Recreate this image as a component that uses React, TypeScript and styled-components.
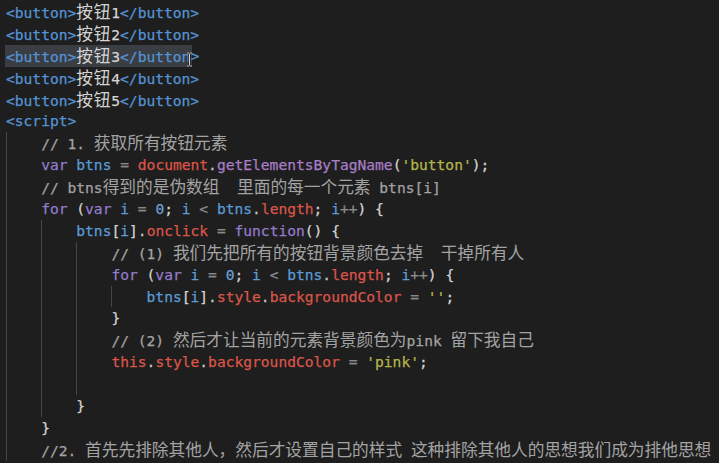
import React from "react";
import styled, { createGlobalStyle } from "styled-components";

const GlobalStyle = createGlobalStyle`
  html, body { margin: 0; padding: 0; background: #1e1e1e; }
  #root { width: 719px; height: 463px; }
`;

const COLORS: Record<string, string> = {
  tag: "#5593d3",
  txt: "#d4d4d4",
  cm: "#a3a3a3",
  kw: "#937ccb",
  vb: "#5b9bd6",
  prop: "#db5549",
  fn: "#a87dc6",
  str: "#b3b64c",
  op: "#8a8a8a",
  num: "#6a9fd4",
  p: "#d4d4d4",
  dot: "#c4c4c4",
};

const Editor = styled.div`
  position: relative;
  box-sizing: border-box;
  width: 719px;
  height: 463px;
  overflow: hidden;
  background: #1e1e1e;
  padding: 1px 0 0 6px;
  font-family: "DejaVu Sans Mono", "Liberation Mono", monospace;
  font-size: 14.6px;
  -webkit-text-stroke: 0.25px;
`;

const Line = styled.div`
  height: 21.9px;
  line-height: 21.9px;
  white-space: pre;
`;

const Indent = styled.span<{ $guide: boolean }>`
  display: inline-block;
  box-sizing: border-box;
  width: 4ch;
  height: 21.9px;
  vertical-align: top;
  border-left: 1px solid ${(p) => (p.$guide ? "#47473a" : "transparent")};
`;

const Tok = styled.span<{ $c: string }>`
  color: ${(p) => COLORS[p.$c]};
`;

const Cjk = styled.span<{ $wide: boolean }>`
  font-family: "Noto Sans CJK SC", "Noto Sans", sans-serif;
  font-size: 16.7px;
  letter-spacing: ${(p) => (p.$wide ? "0.8px" : "0px")};
  -webkit-text-stroke: 0px;
`;

const Sel = styled.span`
  display: inline-block;
  height: 21.9px;
  vertical-align: top;
  background: #3a3d41;
  margin-left: -1px;
  padding-left: 1px;
  padding-right: 2px;
  margin-right: -2px;
`;

const IBeam = styled.svg`
  position: absolute;
  left: 186px;
  top: 52px;
`;

type T = [string, string];

const renderText = (text: string, wide: boolean) => {
  const parts = text.split(/([\u3000-\u9fff\uff00-\uffef]+)/);
  return parts.map((s, i) =>
    /[\u3000-\u9fff\uff00-\uffef]/.test(s) ? (
      <Cjk key={i} $wide={wide}>
        {s}
      </Cjk>
    ) : (
      s
    )
  );
};

const Toks = ({ toks, wide }: { toks: T[]; wide: boolean }) => (
  <>
    {toks.map(([s, c], i) => (
      <Tok key={i} $c={c}>
        {renderText(s, wide)}
      </Tok>
    ))}
  </>
);

const btn = (n: string): T[] => [
  ["<button>", "tag"],
  ["按钮" + n, "txt"],
  ["</button>", "tag"],
];

const forLoop: T[] = [
  ["for", "kw"],
  [" (", "p"],
  ["var", "kw"],
  [" ", "p"],
  ["i", "vb"],
  [" = ", "op"],
  ["0", "num"],
  ["; ", "p"],
  ["i", "vb"],
  [" < ", "op"],
  ["btns", "vb"],
  [".", "dot"],
  ["length", "prop"],
  ["; ", "p"],
  ["i", "vb"],
  ["++", "op"],
  [") {", "p"],
];

type L = { indent: number; toks: T[]; sel?: boolean };

const lines: L[] = [
  { indent: 0, toks: btn("1") },
  { indent: 0, toks: btn("2") },
  { indent: 0, toks: btn("3"), sel: true },
  { indent: 0, toks: btn("4") },
  { indent: 0, toks: btn("5") },
  { indent: 0, toks: [["<script>", "tag"]] },
  { indent: 1, toks: [["// 1. 获取所有按钮元素", "cm"]] },
  {
    indent: 1,
    toks: [
      ["var", "kw"],
      [" ", "p"],
      ["btns", "vb"],
      [" = ", "op"],
      ["document", "prop"],
      [".", "dot"],
      ["getElementsByTagName", "fn"],
      ["(", "p"],
      ["'button'", "str"],
      [");", "p"],
    ],
  },
  { indent: 1, toks: [["// btns得到的是伪数组  里面的每一个元素 btns[i]", "cm"]] },
  { indent: 1, toks: forLoop },
  {
    indent: 2,
    toks: [
      ["btns", "vb"],
      ["[", "p"],
      ["i", "vb"],
      ["]", "p"],
      [".", "dot"],
      ["onclick", "prop"],
      [" = ", "op"],
      ["function", "kw"],
      ["() {", "p"],
    ],
  },
  { indent: 3, toks: [["// (1) 我们先把所有的按钮背景颜色去掉  干掉所有人", "cm"]] },
  { indent: 3, toks: forLoop },
  {
    indent: 4,
    toks: [
      ["btns", "vb"],
      ["[", "p"],
      ["i", "vb"],
      ["]", "p"],
      [".", "dot"],
      ["style", "prop"],
      [".", "dot"],
      ["backgroundColor", "prop"],
      [" = ", "op"],
      ["''", "str"],
      [";", "p"],
    ],
  },
  { indent: 3, toks: [["}", "p"]] },
  { indent: 3, toks: [["// (2) 然后才让当前的元素背景颜色为pink 留下我自己", "cm"]] },
  {
    indent: 3,
    toks: [
      ["this", "prop"],
      [".", "dot"],
      ["style", "prop"],
      [".", "dot"],
      ["backgroundColor", "prop"],
      [" = ", "op"],
      ["'pink'", "str"],
      [";", "p"],
    ],
  },
  { indent: 3, toks: [] },
  { indent: 2, toks: [["}", "p"]] },
  { indent: 1, toks: [["}", "p"]] },
  {
    indent: 1,
    toks: [["//2. 首先先排除其他人，然后才设置自己的样式 这种排除其他人的思想我们成为排他思想", "cm"]],
  },
];

export default function App() {
  return (
    <>
      <GlobalStyle />
      <Editor>
        {lines.map((l, i) => (
          <Line key={i}>
            {Array.from({ length: l.indent }).map((_, k) => (
              <Indent key={k} $guide />
            ))}
            {l.sel ? (
              <>
                <Sel>
                  <Toks
                    toks={[
                      ["<button>", "tag"],
                      ["按钮3", "txt"],
                      ["</button", "tag"],
                    ]}
                    wide
                  />
                </Sel>
                <Tok $c="tag">{">"}</Tok>
              </>
            ) : (
              <Toks toks={l.toks} wide={l.indent === 0} />
            )}
          </Line>
        ))}
        <IBeam width="7" height="15" viewBox="0 0 7 15">
          <path
            d="M1 1 H3 M4 1 H6 M3.5 1.5 V13.5 M1 14 H3 M4 14 H6"
            stroke="#1a1a1a"
            strokeWidth="2.2"
            fill="none"
          />
          <path
            d="M1 1 H3 M4 1 H6 M3.5 1.5 V13.5 M1 14 H3 M4 14 H6"
            stroke="#cfcfcf"
            strokeWidth="1"
            fill="none"
          />
        </IBeam>
      </Editor>
    </>
  );
}
